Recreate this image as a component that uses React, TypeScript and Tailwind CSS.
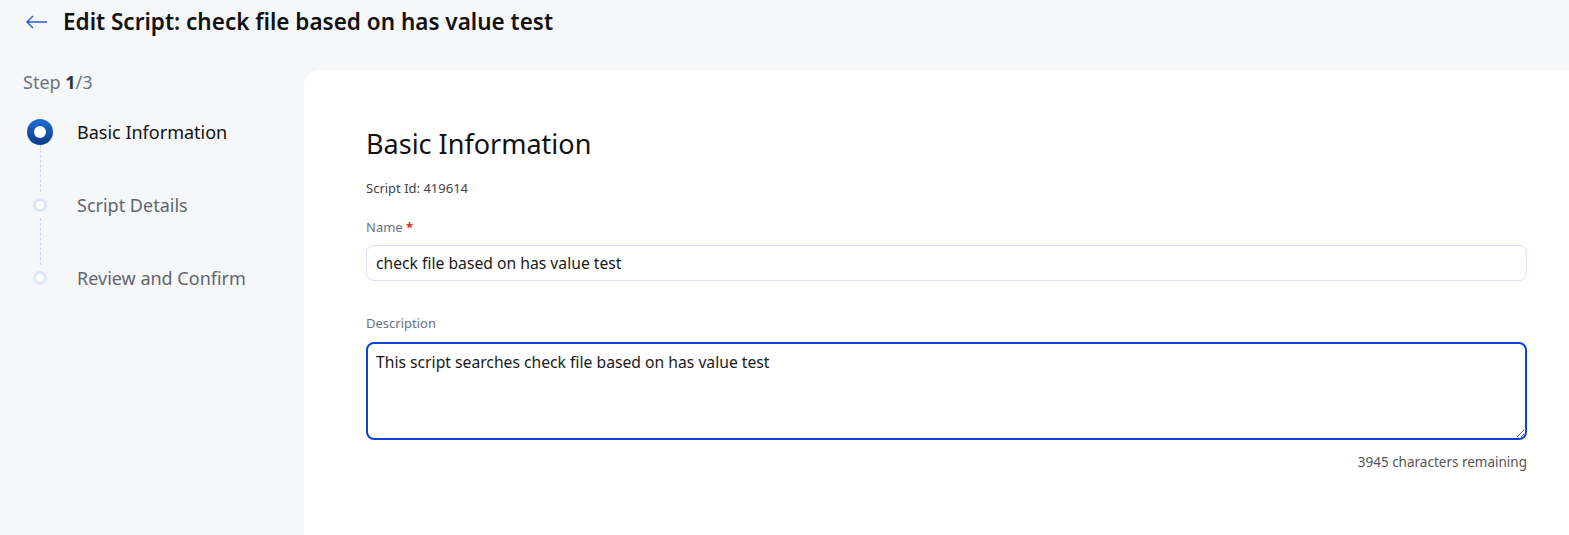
import { useState } from "react";

type Step = { label: string; active?: boolean };

const steps: Step[] = [
	{ label: "Basic Information", active: true },
	{ label: "Script Details" },
	{ label: "Review and Confirm" },
];

const MAX_CHARS = 4000;

const StepDot = ({ active }: { active?: boolean }) =>
	active ? (
		<span className="size-[26px] rounded-full bg-gradient-to-b from-[#1f6fd6] to-[#0b3a8a] grid place-items-center">
			<span className="size-[12px] rounded-full bg-white" />
		</span>
	) : (
		<span className="size-[14px] rounded-full border-[3px] border-[#dbe5fc] bg-white" />
	);

const App = () => {
	const [name, setName] = useState("check file based on has value test");
	const [description, setDescription] = useState(
		"This script searches check file based on has value test",
	);

	return (
		<div
			className="min-h-[535px] h-[535px] bg-[#f6f7f9] flex flex-col overflow-hidden text-[#1a1a1a]"
			style={{ fontFamily: '"Noto Sans", "Open Sans", sans-serif' }}
		>
			{/* page header */}
			<div className="h-[70px] flex items-start pt-[6px] pl-[25px] gap-[15px]">
				<button className="text-[#2f55d4] mt-[9px]">
					<svg width="23" height="14" viewBox="0 0 23 14" fill="none">
						<path d="M22 7H2M8 1L2 7l6 6" stroke="currentColor" strokeWidth="1.4" />
					</svg>
				</button>
				<h1 className="text-[22.5px] font-semibold leading-[32px] text-[#111]">
					Edit Script: check file based on has value test
				</h1>
			</div>

			<div className="flex flex-1">
				{/* stepper */}
				<div className="w-[304px] shrink-0 pl-[23px]">
					<div className="text-[18px] text-[#6b7280] leading-[24px]">
						Step <span className="font-bold text-[#333]">1</span>/3
					</div>
					<div className="mt-[25px]">
						{steps.map((step, i) => (
							<div key={step.label} className="flex">
								<div className="w-[34px] flex flex-col items-center">
									<div className="h-[26px] flex items-center">
										<StepDot active={step.active} />
									</div>
									{i < steps.length - 1 && (
										<div className="h-[47px] border-l border-dashed border-[#c7d5f5]" />
									)}
								</div>
								<div
									className={`ml-[20px] text-[18px] leading-[26px] ${
										step.active ? "text-[#111]" : "text-[#5f6670]"
									}`}
								>
									{step.label}
								</div>
							</div>
						))}
					</div>
				</div>

				{/* form card */}
				<div className="flex-1 bg-white rounded-tl-[16px] pl-[62px] pr-[42px] pt-[56px]">
					<h2 className="text-[27px] leading-[36px] text-[#111]">Basic Information</h2>
					<div className="mt-[17px] text-[13px] text-[#444]">Script Id: 419614</div>

					<label className="block mt-[19px] text-[13px] text-[#6b7280]">
						Name <span className="text-[#d92d20] font-bold">*</span>
					</label>
					<input
						value={name}
						onChange={(e) => setName(e.target.value)}
						className="mt-[8px] w-full h-[36px] rounded-[8px] border border-[#dbe3fb] px-[9px] text-[15.7px] text-[#1a1a1a] outline-none"
					/>

					<label className="block mt-[33px] text-[13px] text-[#6b7280]">Description</label>
					<textarea
						value={description}
						onChange={(e) => setDescription(e.target.value)}
						className="mt-[8px] block w-full h-[98px] rounded-[8px] border-2 border-[#0b45d6] px-[8px] py-[7px] text-[15.7px] leading-[22px] text-[#1a1a1a] outline-none"
					/>
					<div className="mt-[12px] text-right text-[13.5px] text-[#555]">
						{MAX_CHARS - description.length} characters remaining
					</div>
				</div>
			</div>
		</div>
	);
};

export default App;
